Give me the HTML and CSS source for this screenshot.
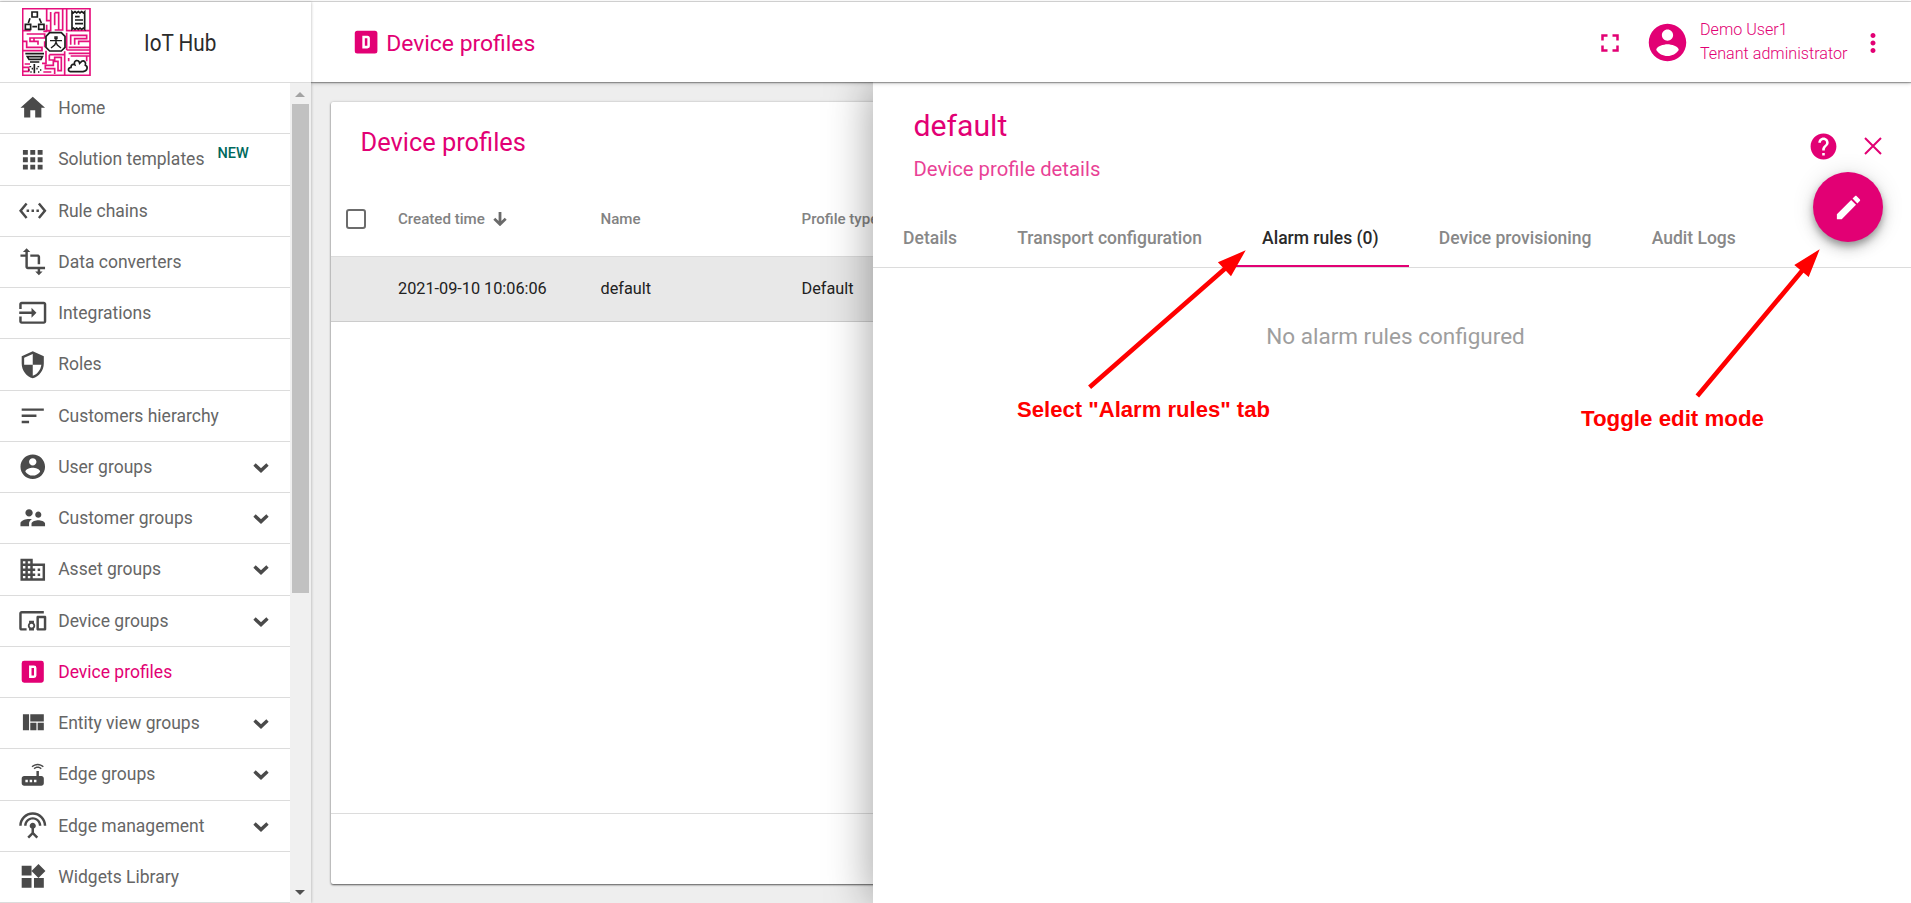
FILE: index.html
```html
<!DOCTYPE html>
<html lang="en">
<head>
<meta charset="utf-8">
<title>Device profiles</title>
<link rel="stylesheet" href="styles.css">
</head>
<body>
<svg class="defs" width="0" height="0">
  <symbol id="i-dbox" viewBox="0 0 24 24"><path fill-rule="evenodd" d="M9 7h4a2 2 0 0 1 2 2v6a2 2 0 0 1-2 2H9V7m2 2v6h2V9h-2M5 3h14a2 2 0 0 1 2 2v14a2 2 0 0 1-2 2H5a2 2 0 0 1-2-2V5a2 2 0 0 1 2-2z"/></symbol>
  <symbol id="i-account" viewBox="0 0 24 24"><path d="M12 2C6.48 2 2 6.48 2 12s4.480 10 10 10 10-4.480 10-10S17.520 2 12 2zm0 3c1.660 0 3 1.340 3 3s-1.340 3-3 3-3-1.340-3-3 1.340-3 3-3zm0 14.200c-2.500 0-4.710-1.280-6-3.220.030-1.990 4-3.080 6-3.080 1.990 0 5.970 1.090 6 3.080-1.290 1.940-3.500 3.220-6 3.220z"/></symbol>
  <symbol id="i-chevron" viewBox="0 0 16 10"><path d="M1.500 1.600 8 7.600l6.500-6" fill="none" stroke="currentColor" stroke-width="3.400"/></symbol>
</svg>
<div class="app">
  <aside class="side">
    <div class="brand">
      <svg class="logo" viewBox="36 24 207 204">
        <path class="maze" d="M36 26H242M38 24V228M36 226H242M240 24V228M110 26V62H122M122 36V92H106M134 38V76M134 38H146V90M158 26V90H134M170 26V92H242M110 74V94H100M38 92H62M50 102H104V114H60V124H84V134M38 124H50V142H96V152H38M72 114V124M104 124V142M118 92V98M170 98V150M182 134V106H230V116H194V134M206 134V124H240M176 142H240M170 150H240M176 160H240M182 168H240M108 152V190H96M118 164H164V154M118 164V180H134V172H154V212H144V184H130V196H106V206H134V222M44 192H60M38 202H56V214H38M100 216H124M164 164V226M176 174V184M230 170V184"/>
        <g class="ink">
          <path d="M66 36h16v15H66zM46 73h16v15H46zM86 73h16v15H86zM60 55l-5 14M88 55l6 14M67 80h14"/>
          <path d="M186 35l4 4 5-4 5 4 5-4 5 4 5-4 5 4 4-4V88l-4-4-5 4-5-4-5 4-5-4-5 4-5-4-4 4zM195 50h14M195 60h24M195 71h24" fill="#fff"/>
          <path d="M119 98h35l11 11v33l-11 11h-35l-11-11v-33z" fill="#fff"/>
          <path d="M135 111h6v5h-6zM120 122h36M138 118v10M138 127l-4 8-11 9M138 127l4 8 11 9" stroke-width="4.200"/>
          <path d="M46 161h56M52 170h45l-4 8H57zM60 186h28" fill="#fff"/>
          <path d="M73 192v28M61 198v4M85 198v4M55 210h4M65 206h4M79 206h4M90 210h4M61 216h4M84 216h4"/>
          <path d="M181 215h38c15-2 15-16 7-19 3-10-4-16-11-12l-6 6c-2-14-20-9-15 4-9-4-13 6-9 8-12 0-12 11-4 13z" fill="#fff"/>
        </g>
      </svg>
      <span class="brand-name">IoT Hub</span>
    </div>
    <div class="side-body">
      <nav class="menu">
        <a class="item"><svg viewBox="0 0 24 24"><path d="M10 20v-6h4v6h5v-8h3L12 3 2 12h3v8z"/></svg><span>Home</span></a>
        <a class="item"><svg viewBox="0 0 24 24"><path d="M4 8h4V4H4v4zm6 12h4v-4h-4v4zm-6 0h4v-4H4v4zm0-6h4v-4H4v4zm6 0h4v-4h-4v4zm6-10v4h4V4h-4zm-6 4h4V4h-4v4zm6 6h4v-4h-4v4zm0 6h4v-4h-4v4z"/></svg><span>Solution templates</span><span class="new">NEW</span></a>
        <a class="item"><svg viewBox="0 0 24 24"><path d="M7.770 6.760L6.230 5.480.820 12l5.410 6.520 1.540-1.280L3.420 12l4.350-5.240zM7 13h2v-2H7v2zm10-2h-2v2h2v-2zm-6 2h2v-2h-2v2zm6.770-7.520l-1.540 1.280L20.580 12l-4.350 5.240 1.540 1.280L23.180 12l-5.410-6.520z"/></svg><span>Rule chains</span></a>
        <a class="item"><svg viewBox="0 0 24 24"><path d="M22 18v-2H8V4h2L7 1 4 4h2v2H2v2h4v8c0 1.100.900 2 2 2h8v2h-2l3 3 3-3h-2v-2h4zM10 8h6v6h2V8c0-1.100-.900-2-2-2h-6v2z"/></svg><span>Data converters</span></a>
        <a class="item"><svg viewBox="0 0 24 24"><path d="M21 3.010H3c-1.100 0-2 .900-2 2V9h2V4.990h18v14.030H3V15H1v4.010c0 1.100.900 1.980 2 1.980h18c1.100 0 2-.880 2-1.980v-14c0-1.110-.900-2-2-2zM11 16l4-4-4-4v3H1v2h10v3z"/></svg><span>Integrations</span></a>
        <a class="item"><svg viewBox="0 0 24 24"><path d="M12 1L3 5v6c0 5.550 3.840 10.740 9 12 5.160-1.260 9-6.450 9-12V5l-9-4zm0 10.990h7c-.530 4.120-3.280 7.790-7 8.940V12H5V6.300l7-3.110v8.800z"/></svg><span>Roles</span></a>
        <a class="item"><svg viewBox="0 0 24 24"><path d="M3 18h6v-2H3v2zM3 6v2h18V6H3zm0 7h12v-2H3v2z"/></svg><span>Customers hierarchy</span></a>
        <a class="item"><svg><use href="#i-account"/></svg><span>User groups</span><svg class="chev"><use href="#i-chevron"/></svg></a>
        <a class="item"><svg viewBox="0 0 24 24"><path d="M16.500 12c1.380 0 2.490-1.120 2.490-2.500S17.880 7 16.500 7C15.120 7 14 8.120 14 9.500s1.120 2.500 2.500 2.500zM9 11c1.660 0 2.990-1.340 2.990-3S10.660 5 9 5C7.340 5 6 6.340 6 8s1.340 3 3 3zm7.500 3c-1.830 0-5.500.920-5.500 2.750V19h11v-2.250c0-1.830-3.670-2.750-5.500-2.750zM9 13c-2.330 0-7 1.170-7 3.500V19h7v-2.250c0-.850.330-2.340 2.370-3.470C10.500 13.100 9.660 13 9 13z"/></svg><span>Customer groups</span><svg class="chev"><use href="#i-chevron"/></svg></a>
        <a class="item"><svg viewBox="0 0 24 24"><path d="M12 7V3H2v18h20V7H12zM6 19H4v-2h2v2zm0-4H4v-2h2v2zm0-4H4V9h2v2zm0-4H4V5h2v2zm4 12H8v-2h2v2zm0-4H8v-2h2v2zm0-4H8V9h2v2zm0-4H8V5h2v2zm10 12h-8v-2h2v-2h-2v-2h2v-2h-2V9h8v10zm-2-8h-2v2h2v-2zm0 4h-2v2h2v-2z"/></svg><span>Asset groups</span><svg class="chev"><use href="#i-chevron"/></svg></a>
        <a class="item"><svg viewBox="0 0 24 24"><path d="M3 6h18V4H3c-1.100 0-2 .900-2 2v12c0 1.100.900 2 2 2h4v-2H3V6zm10 6H9v1.780c-.610.550-1 1.330-1 2.220s.390 1.670 1 2.220V20h4v-1.780c.610-.550 1-1.340 1-2.220s-.390-1.670-1-2.220V12zm-2 5.500c-.830 0-1.500-.670-1.500-1.500s.670-1.500 1.500-1.500 1.500.670 1.500 1.500-.670 1.500-1.500 1.500zM22 8h-6c-.500 0-1 .500-1 1v10c0 .500.500 1 1 1h6c.500 0 1-.500 1-1V9c0-.500-.500-1-1-1zm-1 10h-4v-8h4v8z"/></svg><span>Device groups</span><svg class="chev"><use href="#i-chevron"/></svg></a>
        <a class="item active"><svg><use href="#i-dbox"/></svg><span>Device profiles</span></a>
        <a class="item"><svg viewBox="0 0 24 24"><path d="M10 18h5v-6h-5v6zm-6 0h5V5H4v13zm12 0h5v-6h-5v6zM10 5v6h11V5H10z"/></svg><span>Entity view groups</span><svg class="chev"><use href="#i-chevron"/></svg></a>
        <a class="item"><svg viewBox="0 0 24 24"><path d="M20.200 5.900l.800-.800C19.600 3.700 17.800 3 16 3s-3.600.700-5 2.100l.800.800C13 4.800 14.500 4.200 16 4.200s3 .600 4.200 1.700zm-.900.800c-.900-.900-2.100-1.400-3.300-1.400s-2.400.500-3.300 1.400l.800.800c.700-.700 1.600-1 2.500-1 .900 0 1.800.300 2.500 1l.800-.800zM19 13h-2V9h-2v4H5c-1.100 0-2 .900-2 2v4c0 1.100.900 2 2 2h14c1.100 0 2-.900 2-2v-4c0-1.100-.900-2-2-2zM8 18H6v-2h2v2zm3.500 0h-2v-2h2v2zm3.500 0h-2v-2h2v2z"/></svg><span>Edge groups</span><svg class="chev"><use href="#i-chevron"/></svg></a>
        <a class="item"><svg viewBox="0 0 24 24"><path d="M12 5c-3.870 0-7 3.130-7 7h2c0-2.760 2.240-5 5-5s5 2.240 5 5h2c0-3.870-3.130-7-7-7zm1 9.290c.880-.390 1.500-1.260 1.500-2.290 0-1.380-1.120-2.500-2.500-2.500S9.500 10.620 9.500 12c0 1.020.620 1.900 1.500 2.290v3.300L7.590 21 9 22.410l3-3 3 3L16.410 21 13 17.590v-3.300zM12 1C5.930 1 1 5.930 1 12h2c0-4.970 4.030-9 9-9s9 4.030 9 9h2c0-6.070-4.930-11-11-11z"/></svg><span>Edge management</span><svg class="chev"><use href="#i-chevron"/></svg></a>
        <a class="item"><svg viewBox="0 0 24 24"><path d="M13 13v8h8v-8h-8zM3 21h8v-8H3v8zM3 3v8h8V3H3zm13.660-1.310L11 7.340 16.660 13l5.660-5.660-5.660-5.650z"/></svg><span>Widgets Library</span></a>
      </nav>
      <div class="scroll">
        <svg class="up" viewBox="0 0 10 5"><path d="M0 5 5 0l5 5z"/></svg>
        <div class="thumb"></div>
        <svg class="down" viewBox="0 0 10 5"><path d="M0 0h10L5 5z"/></svg>
      </div>
    </div>
  </aside>
  <div class="main">
    <header class="bar">
      <svg class="bar-ico"><use href="#i-dbox"/></svg>
      <span class="bar-title">Device profiles</span>
      <span class="grow"></span>
      <svg class="full" viewBox="0 0 24 24"><path d="M7 14H5v5h5v-2H7v-3zm-2-4h2V7h3V5H5v5zm12 7h-3v2h5v-5h-2v3zM14 5v2h3v3h2V5h-5z"/></svg>
      <svg class="avatar"><use href="#i-account"/></svg>
      <div class="user"><span>Demo User1</span><span>Tenant administrator</span></div>
      <svg class="more" viewBox="0 0 24 24"><path d="M12 8c1.100 0 2-.900 2-2s-.900-2-2-2-2 .900-2 2 .900 2 2 2zm0 2c-1.100 0-2 .900-2 2s.900 2 2 2 2-.900 2-2-.900-2-2-2zm0 6c-1.100 0-2 .900-2 2s.900 2 2 2 2-.900 2-2-.900-2-2-2z"/></svg>
    </header>
    <div class="content">
      <section class="card">
        <h2 class="card-title">Device profiles</h2>
        <div class="row head">
          <span class="check"></span>
          <span class="c1">Created time<svg viewBox="0 0 14 14"><path d="M7 0v12M1.300 6.800 7 12.300l5.700-5.500" fill="none" stroke="currentColor" stroke-width="2.800"/></svg></span>
          <span class="c2">Name</span>
          <span class="c3">Profile type</span>
        </div>
        <div class="row data">
          <span class="c1">2021-09-10 10:06:06</span>
          <span class="c2">default</span>
          <span class="c3">Default</span>
        </div>
        <div class="grow"></div>
        <div class="pager"></div>
      </section>
      <section class="drawer">
        <div class="drawer-head">
          <div class="titles"><span class="d-title">default</span><span class="d-sub">Device profile details</span></div>
          <svg class="help" viewBox="0 0 24 24"><path d="M12 2C6.480 2 2 6.480 2 12s4.480 10 10 10 10-4.480 10-10S17.520 2 12 2zm1 17h-2v-2h2v2zm2.070-7.750l-.900.920C13.450 12.900 13 13.500 13 15h-2v-.500c0-1.100.450-2.100 1.170-2.830l1.240-1.260c.370-.360.590-.860.590-1.410 0-1.100-.900-2-2-2s-2 .900-2 2H8c0-2.210 1.790-4 4-4s4 1.790 4 4c0 .880-.360 1.680-.930 2.250z"/></svg>
          <svg class="close" viewBox="0 0 18 18"><path d="M1 1l16 16M17 1L1 17" fill="none" stroke="currentColor" stroke-width="2"/></svg>
        </div>
        <div class="tabs">
          <span class="tab">Details</span>
          <span class="tab">Transport configuration</span>
          <span class="tab on">Alarm rules (0)</span>
          <span class="tab">Device provisioning</span>
          <span class="tab">Audit Logs</span>
        </div>
        <div class="empty">No alarm rules configured</div>
        <button class="fab"><svg viewBox="0 0 24 24"><path d="M3 17.250V21h3.750L17.810 9.940l-3.750-3.750L3 17.250zM20.710 7.040c.390-.390.390-1.020 0-1.410l-2.340-2.340c-.390-.390-1.020-.390-1.410 0l-1.830 1.830 3.750 3.750 1.830-1.830z"/></svg></button>
      </section>
    </div>
  </div>
</div>
<svg class="notes" viewBox="0 0 1911 903">
  <path d="M1089.600 387.300L1228 266M1697.300 396L1804 268.500" fill="none" stroke="#f00" stroke-width="4.600"/>
  <path d="M1245.700 250.300L1217.900 262.300L1231 276.300zM1819.700 249.300L1794.300 265L1808.700 277z"/>
  <text x="1017" y="417" textLength="253" lengthAdjust="spacingAndGlyphs">Select "Alarm rules" tab</text>
  <text x="1581" y="426" textLength="183" lengthAdjust="spacingAndGlyphs">Toggle edit mode</text>
</svg>
</body>
</html>
```
FILE: styles.css
```css
* { box-sizing: border-box; }
body {
  margin: 0;
  width: 1911px;
  height: 903px;
  overflow: hidden;
  font-family: Roboto, "Liberation Sans", sans-serif;
  background: #fff;
  color: #212121;
}
svg { display: block; fill: currentColor; flex: none; }
.defs { position: absolute; }
.grow { flex: 1; }

.app {
  display: flex;
  height: 903px;
  padding-top: 2px;
  background: linear-gradient(#fff 1px, #dcdcdc 1px, #dcdcdc 2px, #fff 2px);
}

.side {
  width: 311px;
  display: flex;
  flex-direction: column;
  background: #fff;
  box-shadow: 0 0 3px rgba(0, 0, 0, .3);
  position: relative;
  z-index: 3;
}
.brand {
  height: 81px;
  flex: none;
  display: flex;
  align-items: center;
  padding: 0 0 0 22px;
  border-bottom: 1px solid #dcdcdc;
}
.logo { width: 69px; height: 68px; background: #fff; }
.maze { fill: none; stroke: #e6107d; stroke-width: 5; }
.ink { fill: none; stroke: #1c1c1c; stroke-width: 5; }
.brand-name {
  margin: 2px 0 0 53px;
  font-size: 23px;
  color: #2b2b2b;
  transform: scaleX(.9);
  transform-origin: left;
}

.side-body { flex: 1; display: flex; min-height: 0; }
.menu { width: 290px; display: flex; flex-direction: column; }
.item {
  flex: 1;
  display: flex;
  align-items: center;
  padding: 0 21px 0 18px;
  border-bottom: 1px solid #dcdcdc;
  color: #4a4a4a;
  font-size: 17.500px;
}
.item > svg { width: 29.500px; height: 29.500px; margin-right: 10.700px; }
.item .chev { width: 16px; height: 10px; margin: 2px 0 0 auto; }
.item > span { color: #666; }
.item.active, .item.active > span { color: #e20074; }
.item > .new {
  color: #00695c;
  font-size: 14.500px;
  font-weight: 500;
  margin: 0 0 12px 13px;
}
.scroll {
  width: 21px;
  background: #f0f0f0;
  display: flex;
  flex-direction: column;
  align-items: center;
  padding: 9px 1px 8px 0;
}
.scroll .up { width: 10px; height: 5px; color: #a3a3a3; }
.scroll .down { width: 10px; height: 5px; margin-top: auto; color: #505050; }
.thumb { width: 17px; height: 489px; margin-top: 7px; background: #c1c1c1; }

.main { flex: 1; display: flex; flex-direction: column; min-width: 0; }
.bar {
  height: 80px;
  flex: none;
  display: flex;
  align-items: center;
  padding: 2px 23px 0 40px;
  color: #e20074;
  background: #fff;
  box-shadow: 0 1px 1px rgba(0, 0, 0, .3), 0 1px 4px rgba(0, 0, 0, .25);
  position: relative;
  z-index: 2;
}
.bar-ico { width: 30.200px; height: 30.200px; margin-top: -1px; }
.bar-title { margin-left: 5px; font-size: 22.900px; }
.full { width: 30px; height: 30px; margin-right: 20px; }
.avatar { width: 45px; height: 45px; margin: -2px 10px 0 0; }
.user {
  width: 158px;
  margin-top: -3px;
  display: flex;
  flex-direction: column;
  font-size: 16.150px;
  line-height: 24px;
  font-weight: 300;
}
.more { width: 30px; height: 30px; }

.content {
  flex: 1;
  display: flex;
  background: #eee;
  padding: 20px 0 19px 20px;
  min-height: 0;
}
.card {
  width: 560px;
  flex: none;
  display: flex;
  flex-direction: column;
  background: #fff;
  border-radius: 2px;
  box-shadow: 0 1px 2px rgba(0, 0, 0, .6), 0 0 3px rgba(0, 0, 0, .15);
}
.card-title {
  margin: 0;
  height: 80px;
  padding-left: 29.500px;
  font-size: 25.400px;
  line-height: 81px;
  font-weight: 400;
  color: #e20074;
}
.row {
  display: grid;
  grid-template-columns: 67px 202.500px 201px 1fr;
  align-items: center;
  border-bottom: 1px solid #dcdcdc;
}
.head { height: 75px; font-size: 15.100px; font-weight: 500; color: #828282; }
.data { height: 65px; padding-bottom: 2px; font-size: 16.250px; background: #e8e8e8; border-color: #ccc; }
.row .c1 { grid-column: 2; display: flex; align-items: center; }
.c1 svg { width: 14px; height: 14px; margin-left: 8px; color: #6a6a6a; }
.row .c2, .row .c3 { white-space: nowrap; }
.check {
  width: 20px;
  height: 20px;
  margin-left: 15px;
  border: 2px solid #6c6c6c;
  border-radius: 3px;
}
.pager { height: 71px; border-top: 1px solid #dcdcdc; }

.drawer {
  width: 1038px;
  margin: -20px 0 -19px -18px;
  flex: none;
  background: #fff;
  position: relative;
  z-index: 1;
  box-shadow: -2px 0 42px rgba(0, 0, 0, .36);
}
.drawer-head { height: 128px; display: flex; color: #e20074; padding: 24px 23px 0 40.500px; }
.titles { flex: 1; display: flex; flex-direction: column; }
.d-title { font-size: 30.200px; line-height: 40px; }
.d-sub { margin-top: 10px; font-size: 20.300px; line-height: 27px; opacity: .75; font-weight: 400; }
.help { width: 31px; height: 31px; margin: 25px 25px 0 0; }
.close { width: 18px; height: 18px; margin: 31px 6px 0 0; }
.tabs { height: 58px; display: flex; border-bottom: 1px solid #dcdcdc; }
.tab {
  display: flex;
  align-items: center;
  height: 57px;
  padding: 0 30.100px;
  font-size: 17.500px;
  font-weight: 500;
  color: #888;
  border-bottom: 2px solid transparent;
}
.tab.on { color: #2a2a2a; border-color: #e20074; }
.empty { padding: 53px 0 0 7px; text-align: center; font-size: 22.500px; line-height: 30px; color: #9e9e9e; }
.fab {
  position: absolute;
  left: 940px;
  top: 90px;
  width: 70px;
  height: 70px;
  padding: 0;
  border: 0;
  border-radius: 50%;
  background: #e20074;
  color: #fff;
  display: grid;
  place-items: center;
  box-shadow: 0 4px 6px rgba(0, 0, 0, .25), 0 7px 13px rgba(0, 0, 0, .16), 0 1px 23px rgba(0, 0, 0, .12);
}
.fab svg { width: 31px; height: 31px; }

.notes {
  position: absolute;
  left: 0;
  top: 0;
  width: 1911px;
  height: 903px;
  z-index: 5;
  color: #f00;
  pointer-events: none;
}
.notes text { font: bold 21.500px "Liberation Sans", sans-serif; }
```
